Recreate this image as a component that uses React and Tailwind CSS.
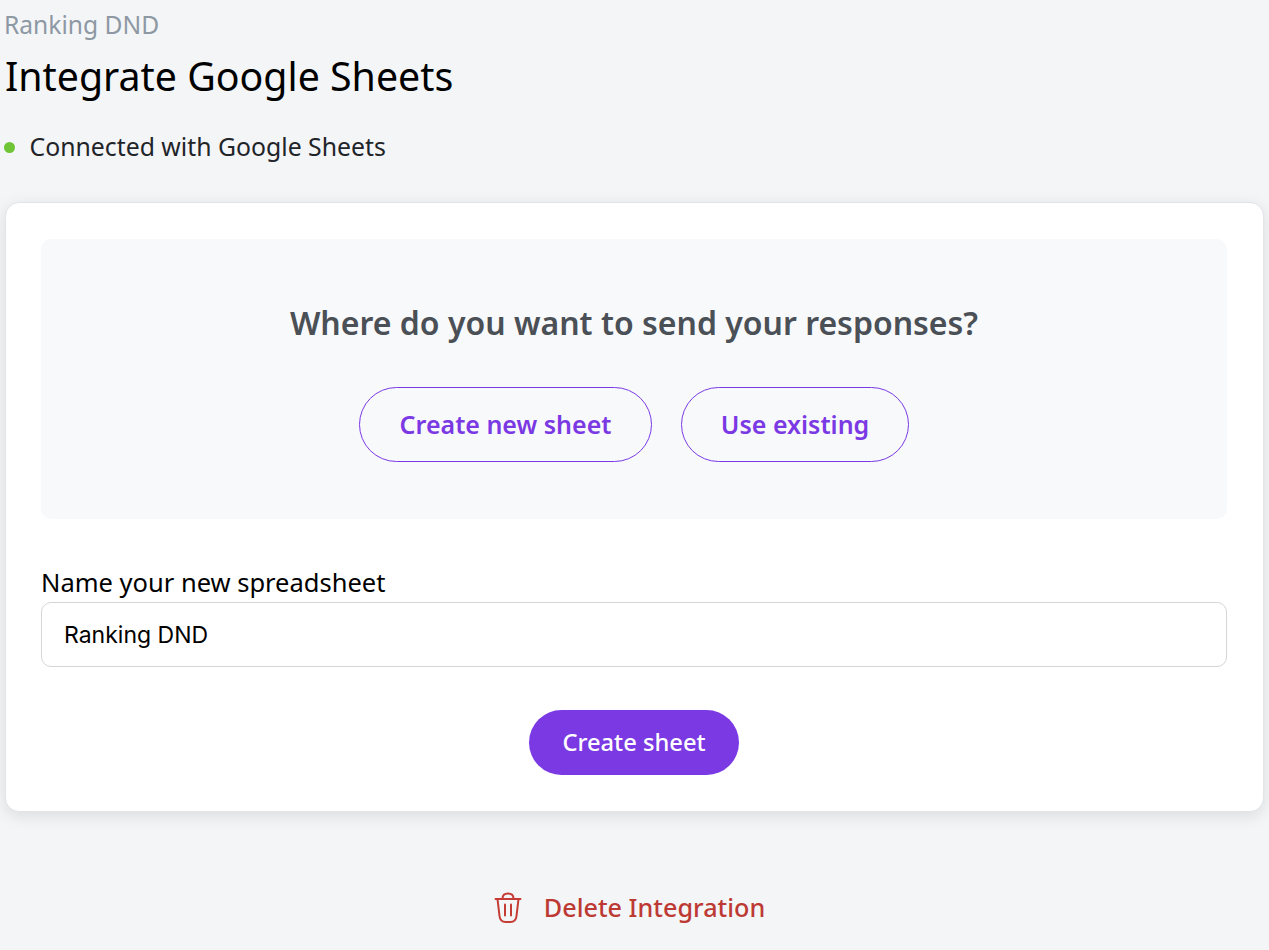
import React from 'react';

function TrashIcon() {
  return (
    <svg width="28" height="32" viewBox="0 0 28 32" fill="none" stroke="#c53b35" strokeWidth="2" strokeLinecap="round" strokeLinejoin="round">
      <path d="M8.5 6.5C8.5 3.5 10.500 1.500 14 1.500s5.500 2 5.500 5" />
      <path d="M1.500 7h25" />
      <path d="M3.500 7l2 17c.4 3.500 2.500 6 6 6h5c3.500 0 5.600-2.500 6-6l2-17" />
      <path d="M11 12.500v11" />
      <path d="M17 12.500v11" />
    </svg>
  );
}

export default function App() {
  return (
    <div className="min-h-[950px] bg-[#f4f5f7] pl-[5px] pr-[5px] font-['Noto_Sans',sans-serif]">
      {/* Header */}
      <p className="-ml-px pt-[8px] text-[24.6px] leading-[33px] text-[#8d98a3]">Ranking DND</p>
      <h1 className="mt-[11px] text-[39.3px] leading-[49px] text-black">Integrate Google Sheets</h1>
      <div className="mt-[29px] flex items-center">
        <span className="-ml-px mt-[1px] h-[11px] w-[11px] rounded-full bg-[#6fc536]" />
        <span className="ml-[14.500px] text-[24.8px] leading-[33px] text-[#1f2429]">Connected with Google Sheets</span>
      </div>

      {/* Card */}
      <div className="mt-[39px] rounded-[14px] border border-[#e3e4e8] bg-white pt-[36px] pr-[36px] pb-[36px] pl-[35px] shadow-[0_4px_16px_rgba(0,0,0,0.1)]">
        <div className="flex h-[280px] flex-col items-center rounded-[10px] bg-[#f8f9fb] pt-[62px]">
          <h2 className="text-[32px] font-semibold leading-[44px] text-[#4a5056]">Where do you want to send your responses?</h2>
          <div className="mt-[42px] flex gap-[29px]">
            <button className="h-[75px] w-[293px] rounded-full border border-[#7b39e4] text-[25px] font-semibold text-[#7b39e4]">Create new sheet</button>
            <button className="h-[75px] w-[228px] rounded-full border border-[#7b39e4] text-[25px] font-semibold text-[#7b39e4]">Use existing</button>
          </div>
        </div>

        <label className="mt-[47px] block text-[25.500px] leading-[33px] text-black">Name your new spreadsheet</label>
        <input
          readOnly
          value="Ranking DND"
          className="mt-[3px] block h-[65px] w-full rounded-[10px] border border-[#d3d5d9] bg-white px-[22px] font-['Inter',sans-serif] text-[23px] text-black outline-none"
        />

        <div className="mt-[43px] flex justify-center">
          <button className="h-[65px] w-[210px] rounded-full bg-[#7b39e4] text-[23.700px] font-medium text-white">Create sheet</button>
        </div>
      </div>

      {/* Delete */}
      <div className="mt-[77px] flex items-center justify-center gap-[22px] pr-[10px]">
        <TrashIcon />
        <span className="text-[25.200px] font-medium text-[#bd3a34]">Delete Integration</span>
      </div>
    </div>
  );
}
